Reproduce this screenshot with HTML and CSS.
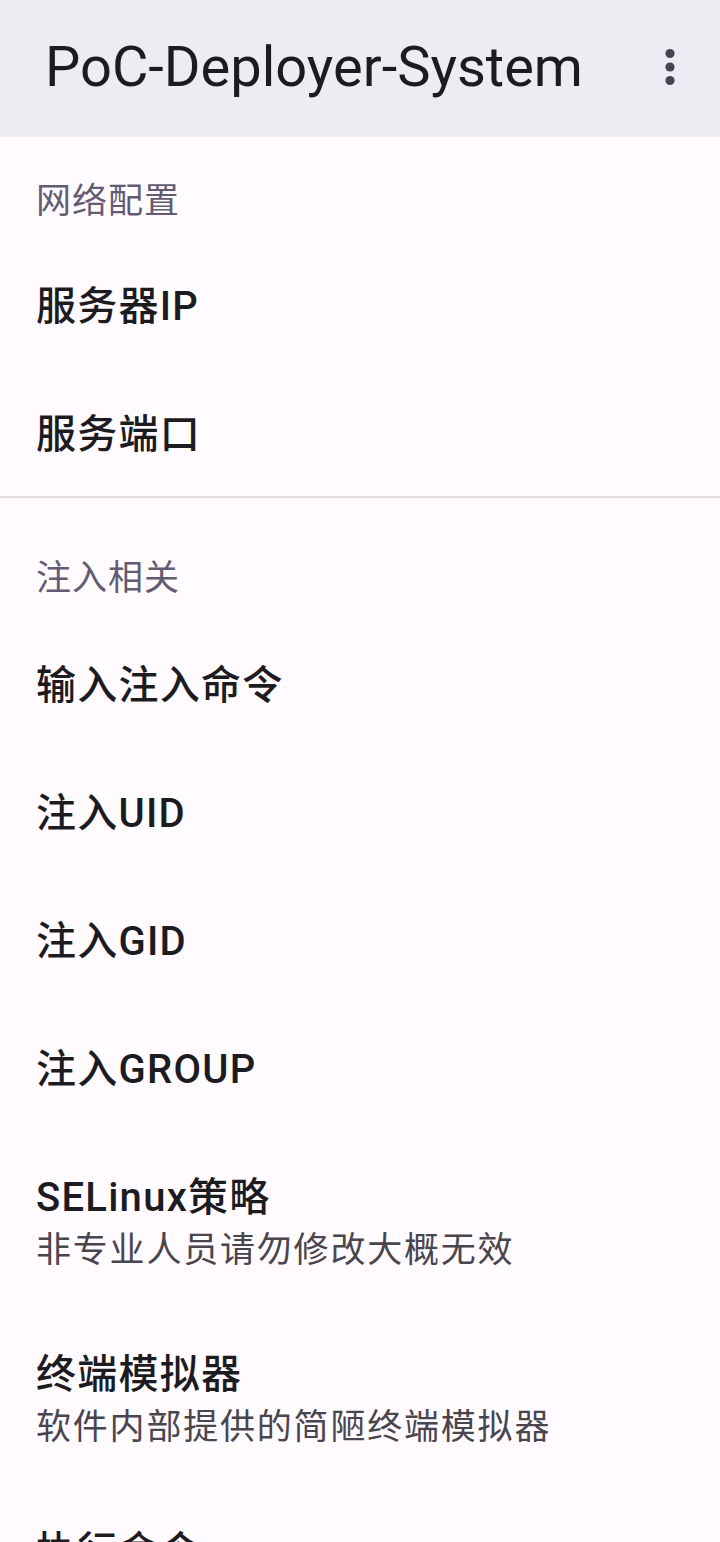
FILE: index.html
```html
<!DOCTYPE html>
<html lang="zh-CN">
<head>
<meta charset="utf-8">
<title>PoC-Deployer-System</title>
<link rel="stylesheet" href="styles.css">
</head>
<body>
<header class="appbar">
  <h1 class="appbar-title">PoC-Deployer-System</h1>
  <button class="overflow" aria-label="更多选项">
    <svg width="24" height="40" viewBox="0 0 24 40" aria-hidden="true">
      <circle cx="12" cy="6.5" r="4.6"/>
      <circle cx="12" cy="20" r="4.6"/>
      <circle cx="12" cy="33.5" r="4.6"/>
    </svg>
  </button>
</header>
<main class="prefs">
  <section class="group">
    <div class="category first">网络配置</div>
    <div class="pref"><div class="pref-title">服务器IP</div></div>
    <div class="pref"><div class="pref-title">服务端口</div></div>
  </section>
  <div class="divider"></div>
  <section class="group">
    <div class="category">注入相关</div>
    <div class="pref"><div class="pref-title">输入注入命令</div></div>
    <div class="pref"><div class="pref-title">注入UID</div></div>
    <div class="pref"><div class="pref-title">注入GID</div></div>
    <div class="pref"><div class="pref-title">注入GROUP</div></div>
    <div class="pref">
      <div class="pref-title">SELinux策略</div>
      <div class="pref-summary">非专业人员请勿修改大概无效</div>
    </div>
    <div class="pref">
      <div class="pref-title">终端模拟器</div>
      <div class="pref-summary">软件内部提供的简陋终端模拟器</div>
    </div>
    <div class="pref"><div class="pref-title">执行命令</div></div>
  </section>
</main>
</body>
</html>
```
FILE: styles.css
```css
html, body {
  margin: 0;
  padding: 0;
}
body {
  background: #fffbfe;
  color: #1c1b1f;
  font-family: Roboto, "Noto Sans CJK SC", sans-serif;
  width: 720px;
  height: 1542px;
  overflow: hidden;
}
.appbar {
  height: 137px;
  background: #efebf3;
  display: flex;
  align-items: center;
  padding: 0 26px 0 45px;
  box-sizing: border-box;
}
.appbar-title {
  flex: 1;
  margin: 0;
  font-size: 56px;
  font-weight: 400;
  line-height: 64px;
  color: #1c1b1f;
  padding-bottom: 3px;
}
.overflow {
  border: 0;
  background: transparent;
  padding: 0;
  width: 48px;
  height: 48px;
  display: flex;
  align-items: center;
  justify-content: center;
  margin-top: -4px;
}
.overflow svg {
  fill: #49454f;
}
.prefs {
  display: flex;
  flex-direction: column;
}
.group {
  display: flex;
  flex-direction: column;
}
.category {
  font-size: 35px;
  line-height: 42px;
  letter-spacing: 1px;
  color: #625b71;
  padding: 60px 36px 21px;
}
.category.first {
  padding-top: 44px;
  padding-bottom: 19px;
}
.pref {
  padding: 36px 36px 35px;
  display: flex;
  flex-direction: column;
}
.pref-title {
  font-size: 40px;
  line-height: 57px;
  font-weight: 500;
  letter-spacing: 1.25px;
  color: #1c1b1f;
}
.pref-summary {
  font-size: 35px;
  line-height: 49px;
  letter-spacing: 1.8px;
  color: #49454f;
}
.divider {
  height: 2px;
  margin-top: -2px;
  background: #e2dfe4;
}
```
